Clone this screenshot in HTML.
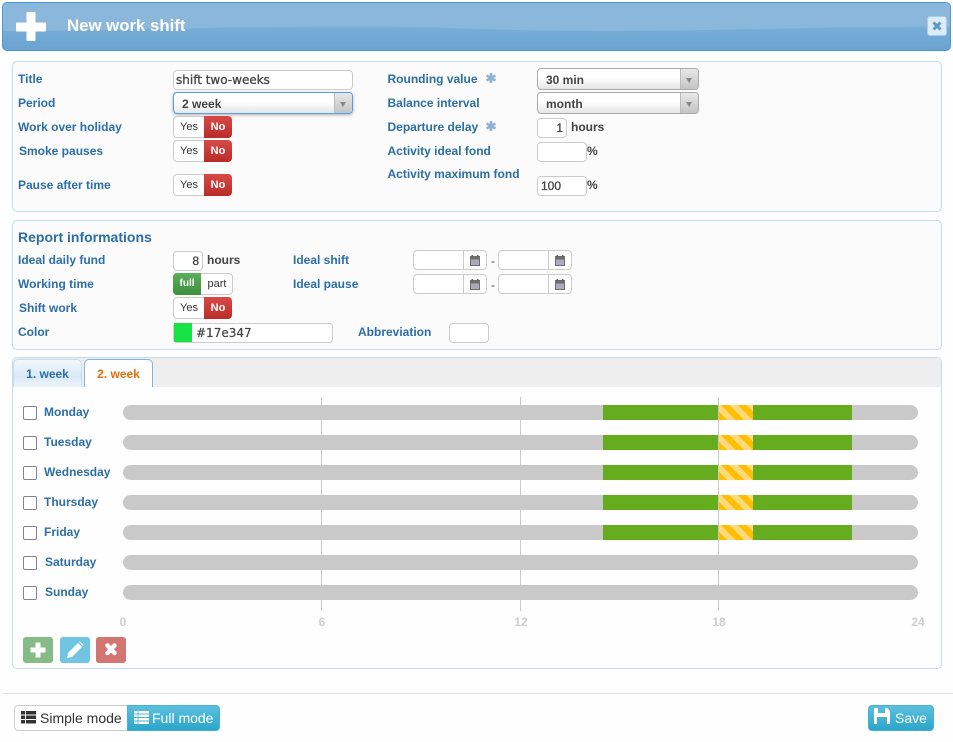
<!DOCTYPE html>
<html><head><meta charset="utf-8">
<style>
html,body{margin:0;padding:0;background:#fefefe;}
body{width:953px;height:742px;position:relative;overflow:hidden;font-family:"Liberation Sans",sans-serif;font-size:12px;color:#333;}
div,span,svg{position:absolute;box-sizing:border-box;}
.p{left:12px;width:930px;border:1px solid #c5dcec;border-radius:5px;background:#fbfbfb;}
.l{font-weight:bold;color:#2c6ea6;font-size:12px;line-height:14px;white-space:nowrap;}
.i{background:#fff;border:1px solid #ccc;border-radius:4px;height:20px;font-size:12px;line-height:19px;white-space:nowrap;color:#444;-webkit-text-stroke:.3px #444;}
.s{background:linear-gradient(#fff 45%,#e6e6e6);border:1px solid #aaa;border-radius:4px;height:22px;width:162px;left:537px;font-weight:bold;line-height:22px;color:#444;padding-left:8px;}
.s b{position:absolute;right:0;top:0;width:17px;height:20px;border-left:1px solid #bbb;background:linear-gradient(#e8e8e8,#c4c4c4);border-radius:0 3px 3px 0;}
.s b:after{content:"";position:absolute;left:5px;top:9px;border:3.5px solid transparent;border-top:5px solid #888;border-bottom:0;}
.yn{width:59px;height:22px;left:173px;border:1px solid #ccc;border-radius:4px;background:#fff;font-size:11px;line-height:21px;color:#333;}
.yn i{position:absolute;left:0;width:30px;top:0;text-align:center;font-style:normal;}
.yn u{position:absolute;left:30px;right:-1px;top:-1px;bottom:-1px;text-decoration:none;text-align:center;color:#fff;font-weight:bold;line-height:23px;background:linear-gradient(#d84a48,#b92c28);border-radius:0 4px 4px 0;}
.t{font-size:12px;font-weight:bold;color:#444;line-height:14px;white-space:nowrap;}
.d{width:74px;height:20px;background:#fff;border:1px solid #ccc;border-radius:4px;}
.d b{position:absolute;left:49px;top:0;bottom:0;width:1px;background:#ccc;}
.d svg{left:55px;top:3px;}
.bar{left:123px;width:795px;height:15px;background:#c9c9c9;border-radius:8px;}
.g1{left:603px;width:249px;height:15px;background:#65ac1e;}
.g2{left:719px;width:34px;height:15px;background:repeating-linear-gradient(45deg,#ffbe00 0 6px,#ffd97a 6px 12px);}
.cb{left:23px;width:14px;height:14px;border:1px solid #85809a;border-radius:2px;background:#fff;}
.gl{width:1px;top:397px;height:214px;background:#c9c9c9;}
.n{font-size:12px;font-weight:bold;color:#cfcfcf;top:615px;line-height:14px;text-align:center;width:24px;}
.ab{top:637px;width:30px;height:26px;border-radius:3px;}
</style></head><body>

<div style="left:2px;top:2px;width:949px;height:49px;border:1px solid #4b98da;border-radius:5px;background:linear-gradient(#8ab7da 45%,#76add6 55%,#6aa3d1);overflow:hidden;">
<svg style="left:-1px;top:-1px" width="949" height="49"><path d="M0 0H949V24C800 25 720 29 600 29C480 29 440 24 360 24C280 24 200 26 100 28C60 28.500 30 29 0 29Z" fill="#8ab7da"/></svg>
</div>
<svg style="left:16px;top:12px" width="30" height="30"><path d="M11.500 0h7a1 1 0 0 1 1 1v9.500H29a1 1 0 0 1 1 1v7a1 1 0 0 1-1 1h-9.500V28a1 1 0 0 1-1 1h-7a1 1 0 0 1-1-1v-8.500H1a1 1 0 0 1-1-1v-7a1 1 0 0 1 1-1h9.500V1a1 1 0 0 1 1-1z" fill="#fff"/></svg>
<div style="left:67px;top:16px;font-size:16.800px;font-weight:bold;color:#fff;line-height:20px;white-space:nowrap;">New work shift</div>
<div style="left:927px;top:16px;width:20px;height:20px;background:#dcebf6;border:1px solid #a9cde8;border-radius:3px;"></div>
<svg style="left:931px;top:20px" width="12" height="12"><path d="M2.500 2.500l7 7M9.500 2.500l-7 7" stroke="#5b9acb" stroke-width="3" fill="none"/></svg>

<div class="p" style="top:61px;height:151px;"></div>
<div class="l" style="left:18px;top:72px;">Title</div>
<div class="l" style="left:18px;top:96px;">Period</div>
<div class="l" style="left:18px;top:120px;">Work over holiday</div>
<div class="l" style="left:19px;top:144px;">Smoke pauses</div>
<div class="l" style="left:18px;top:178px;">Pause after time</div>
<div class="i" style="left:173px;top:70px;width:180px;font-family:'DejaVu Sans',sans-serif;font-size:12px;padding-left:2px;color:#444;">shift two-weeks</div>
<div class="s" style="left:173px;top:92px;width:180px;border-color:#5b9cf0;box-shadow:0 1px 3px rgba(0,0,0,.3);">2 week<b></b></div>
<div class="yn" style="top:116px;"><i>Yes</i><u>No</u></div>
<div class="yn" style="top:140px;"><i>Yes</i><u>No</u></div>
<div class="yn" style="top:174px;"><i>Yes</i><u>No</u></div>

<div class="l" style="left:387.500px;top:72px;">Rounding value</div>
<div class="l" style="left:387.500px;top:96px;">Balance interval</div>
<div class="l" style="left:387.500px;top:120px;">Departure delay</div>
<div class="l" style="left:387.500px;top:144px;">Activity ideal fond</div>
<div class="l" style="left:387.500px;top:167px;">Activity maximum fond</div>
<svg style="left:485px;top:72px" width="12" height="12"><path d="M6 1v10M1.500 3.500l9 5M10.500 3.500l-9 5" stroke="#8fb4d2" stroke-width="2.600" fill="none"/></svg>
<svg style="left:485px;top:120px" width="12" height="12"><path d="M6 1v10M1.500 3.500l9 5M10.500 3.500l-9 5" stroke="#8fb4d2" stroke-width="2.600" fill="none"/></svg>
<div class="s" style="top:68px;">30 min<b></b></div>
<div class="s" style="top:92px;">month<b></b></div>
<div class="i" style="left:537px;top:118px;width:30px;text-align:right;padding-right:3px;">1</div>
<div class="t" style="left:571px;top:120px;">hours</div>
<div class="i" style="left:537px;top:142px;width:50px;"></div>
<div class="t" style="left:587px;top:144px;">%</div>
<div class="i" style="left:537px;top:176px;width:50px;padding-left:3px;">100</div>
<div class="t" style="left:587px;top:178px;">%</div>

<div class="p" style="top:220px;height:130px;"></div>
<div style="left:18px;top:229px;font-size:14px;font-weight:bold;color:#2c6ea6;line-height:16px;white-space:nowrap;">Report informations</div>
<div class="l" style="left:18px;top:253px;">Ideal daily fund</div>
<div class="l" style="left:18px;top:277px;">Working time</div>
<div class="l" style="left:19px;top:301px;">Shift work</div>
<div class="l" style="left:18px;top:325px;">Color</div>
<div class="i" style="left:173px;top:251px;width:30px;text-align:right;padding-right:3px;">8</div>
<div class="t" style="left:207px;top:253px;">hours</div>
<div style="left:173px;top:273px;width:60px;height:22px;border:1px solid #ccc;border-radius:4px;background:#fff;font-size:11px;line-height:21px;">
<div style="left:-1px;top:-1px;width:28px;height:22px;background:linear-gradient(#5bae5b,#3f8f3f);border-radius:4px 0 0 4px;color:#fff;font-weight:bold;text-align:center;line-height:22px;font-size:10px;">full</div>
<div style="left:27px;top:0;width:32px;text-align:center;font-weight:normal;color:#333;font-size:11px;">part</div></div>
<div class="yn" style="top:297px;"><i>Yes</i><u>No</u></div>
<div class="i" style="left:173px;top:323px;width:160px;"></div>
<div style="left:174px;top:323px;width:18px;height:19px;background:#17e347;"></div>
<div style="left:196px;top:325px;font-family:'DejaVu Sans',sans-serif;font-size:12px;line-height:16px;color:#444;-webkit-text-stroke:.2px #444;">#17e347</div>

<div class="l" style="left:293px;top:253px;">Ideal shift</div>
<div class="l" style="left:293px;top:277px;">Ideal pause</div>
<div class="l" style="left:358px;top:325px;">Abbreviation</div>
<div class="i" style="left:449px;top:323px;width:40px;"></div>

<div class="d" style="left:413px;top:250px;"><b></b><svg width="12" height="12"><path d="M1 2h10v10H1z" fill="#6e6e6e"/><path d="M2 5.500h8v5.500H2z" fill="#aab"/><path d="M2.500 1h1.500v2H2.500zM8 1h1.500v2H8z" fill="#666"/></svg></div>
<div class="d" style="left:498px;top:250px;"><b></b><svg width="12" height="12"><path d="M1 2h10v10H1z" fill="#6e6e6e"/><path d="M2 5.500h8v5.500H2z" fill="#aab"/><path d="M2.500 1h1.500v2H2.500zM8 1h1.500v2H8z" fill="#666"/></svg></div>
<div class="d" style="left:413px;top:274px;"><b></b><svg width="12" height="12"><path d="M1 2h10v10H1z" fill="#6e6e6e"/><path d="M2 5.500h8v5.500H2z" fill="#aab"/><path d="M2.500 1h1.500v2H2.500zM8 1h1.500v2H8z" fill="#666"/></svg></div>
<div class="d" style="left:498px;top:274px;"><b></b><svg width="12" height="12"><path d="M1 2h10v10H1z" fill="#6e6e6e"/><path d="M2 5.500h8v5.500H2z" fill="#aab"/><path d="M2.500 1h1.500v2H2.500zM8 1h1.500v2H8z" fill="#666"/></svg></div>
<div class="t" style="left:491px;top:254px;font-weight:normal;">-</div>
<div class="t" style="left:491px;top:278px;font-weight:normal;">-</div>

<div class="p" style="top:357px;height:312px;background:#fefefe;"></div>
<div style="left:13px;top:358px;width:928px;height:29px;background:#eee;border-radius:4px 4px 0 0;"></div>
<div style="left:13px;top:359px;width:69px;height:28px;border:1px solid #c5dcec;border-bottom:0;border-radius:5px 5px 0 0;background:linear-gradient(#f2f8fd,#d9e9f7 60%,#edf5fc);font-weight:bold;color:#2c6ea6;text-align:center;line-height:28px;">1. week</div>
<div style="left:84px;top:359px;width:69px;height:28px;border:1px solid #7fb3e0;border-bottom:0;border-radius:5px 5px 0 0;background:#fefefe;font-weight:bold;color:#e46c0a;text-align:center;line-height:28px;">2. week</div>

<div class="bar" style="top:405px;"></div><div class="bar" style="top:435px;"></div><div class="bar" style="top:465px;"></div><div class="bar" style="top:495px;"></div><div class="bar" style="top:525px;"></div><div class="bar" style="top:555px;"></div><div class="bar" style="top:585px;"></div>
<div class="g1" style="top:405px;"></div><div class="g1" style="top:435px;"></div><div class="g1" style="top:465px;"></div><div class="g1" style="top:495px;"></div><div class="g1" style="top:525px;"></div>
<div class="g2" style="top:405px;"></div><div class="g2" style="top:435px;"></div><div class="g2" style="top:465px;"></div><div class="g2" style="top:495px;"></div><div class="g2" style="top:525px;"></div>
<div class="gl" style="left:321px;"></div><div class="gl" style="left:520px;"></div><div class="gl" style="left:718px;"></div>

<div class="cb" style="top:406px;"></div><div class="cb" style="top:436px;"></div><div class="cb" style="top:466px;"></div><div class="cb" style="top:496px;"></div><div class="cb" style="top:526px;"></div><div class="cb" style="top:556px;"></div><div class="cb" style="top:586px;"></div>
<div class="l" style="left:44px;top:405px;">Monday</div>
<div class="l" style="left:44px;top:435px;">Tuesday</div>
<div class="l" style="left:44px;top:465px;">Wednesday</div>
<div class="l" style="left:44px;top:495px;">Thursday</div>
<div class="l" style="left:44px;top:525px;">Friday</div>
<div class="l" style="left:45px;top:555px;">Saturday</div>
<div class="l" style="left:45px;top:585px;">Sunday</div>

<div class="n" style="left:111px;">0</div><div class="n" style="left:310px;">6</div><div class="n" style="left:509px;">12</div><div class="n" style="left:707px;">18</div><div class="n" style="left:906px;">24</div>

<div class="ab" style="left:23px;background:#86bb85;"></div>
<svg style="left:29px;top:641px" width="18" height="18"><path d="M7 2h4v5h5v4h-5v5H7v-5H2V7h5z" fill="#fff" stroke="#fff" stroke-linejoin="round"/></svg>
<div class="ab" style="left:60px;background:#70c5e2;"></div>
<svg style="left:66px;top:641px" width="18" height="18"><path d="M1 17l1-5L12 2l4 4L6 16zM13 1l1-.5 3.500 3.500-.5 1z" fill="#fff"/></svg>
<div class="ab" style="left:96px;background:#d37571;"></div>
<svg style="left:102px;top:641px" width="18" height="18"><path d="M5.500 4.500l7 7.500M12.500 4.500l-7 7.500" stroke="#fff" stroke-width="4.500" stroke-linecap="round"/></svg>

<div style="left:2px;top:693px;width:951px;height:1px;background:#e2e2e2;"></div>
<div style="left:14px;top:705px;width:114px;height:26px;background:#fff;border:1px solid #ccc;border-radius:4px 0 0 4px;font-size:14px;color:#333;line-height:24px;padding-left:25px;white-space:nowrap;">Simple mode</div>
<svg style="left:21px;top:711px" width="15" height="13"><path d="M0 0h4v3.500H0zM5 0h10v3.500H5zM0 4.500h4V8H0zM5 4.500h10V8H5zM0 9h4v3.500H0zM5 9h10v3.500H5z" fill="#333"/></svg>
<div style="left:127px;top:705px;width:93px;height:26px;background:linear-gradient(#5cc0de,#2ba6cb);border:1px solid #46b1d4;border-radius:0 4px 4px 0;font-size:14px;color:#fff;line-height:24px;padding-left:24px;white-space:nowrap;">Full mode</div>
<svg style="left:134px;top:711px" width="15" height="13"><path d="M0 0h15v2.500H0zM0 3.500h15V6H0zM0 7h15v2.500H0zM0 10.500h15V13H0z" fill="#fff"/><path d="M3.500 0h1v13h-1z" fill="#5cc0de"/></svg>

<div style="left:868px;top:705px;width:66px;height:26px;background:linear-gradient(#5cc0de,#2ba6cb);border:1px solid #46b1d4;border-radius:4px;font-size:14px;color:#fff;line-height:25px;padding-left:26px;white-space:nowrap;">Save</div>
<svg style="left:874px;top:708px" width="16" height="16"><path d="M0 0h13l3 3v13H0zM4 0v5h7V0zM3 9v7h10V9z" fill="#fff" fill-rule="evenodd"/></svg>
</body></html>
